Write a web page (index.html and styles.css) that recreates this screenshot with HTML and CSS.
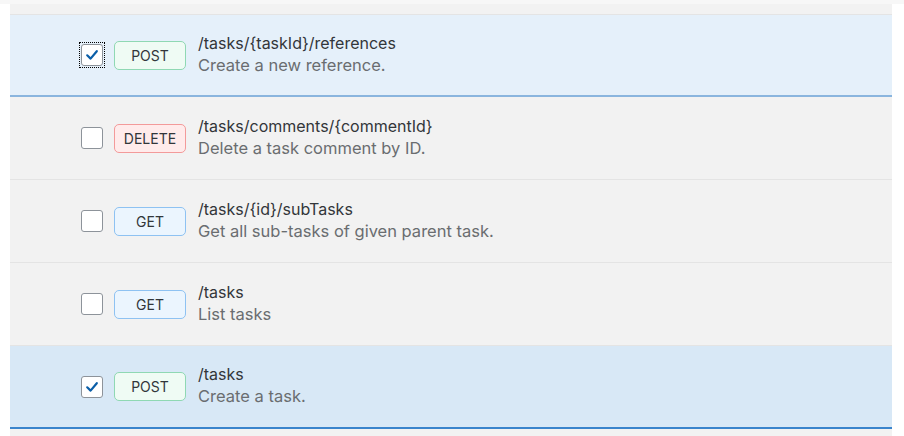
FILE: index.html
```html
<!DOCTYPE html>
<html>
<head>
<meta charset="utf-8">
<link rel="stylesheet" href="styles.css">
</head>
<body>
<div class="topstrip"></div>
<div class="list">
  <div class="row selected">
    <span class="cb checked focus"><svg viewBox="0 0 16 16" width="16" height="16"><path d="M3.2 8.3 L6.6 11.6 L12.8 4.2" fill="none" stroke="#0a5ea8" stroke-width="2.2" stroke-linecap="round" stroke-linejoin="round"/></svg></span>
    <span class="badge post">POST</span>
    <div class="txt"><div class="title">/tasks/{taskId}/references</div><div class="desc">Create a new reference.</div></div>
  </div>
  <div class="row">
    <span class="cb"></span>
    <span class="badge delete">DELETE</span>
    <div class="txt"><div class="title">/tasks/comments/{commentId}</div><div class="desc">Delete a task comment by ID.</div></div>
  </div>
  <div class="row">
    <span class="cb"></span>
    <span class="badge get">GET</span>
    <div class="txt"><div class="title">/tasks/{id}/subTasks</div><div class="desc">Get all sub-tasks of given parent task.</div></div>
  </div>
  <div class="row">
    <span class="cb"></span>
    <span class="badge get">GET</span>
    <div class="txt"><div class="title">/tasks</div><div class="desc">List tasks</div></div>
  </div>
  <div class="row selected hover">
    <span class="cb checked"><svg viewBox="0 0 16 16" width="16" height="16"><path d="M3.2 8.3 L6.6 11.6 L12.8 4.2" fill="none" stroke="#0a5ea8" stroke-width="2.2" stroke-linecap="round" stroke-linejoin="round"/></svg></span>
    <span class="badge post">POST</span>
    <div class="txt"><div class="title">/tasks</div><div class="desc">Create a task.</div></div>
  </div>
</div>
</body>
</html>
```
FILE: styles.css
```css
html, body {
  margin: 0;
  padding: 0;
  background: #ffffff;
  font-family: Inter, "Liberation Sans", Arial, sans-serif;
}
.topstrip {
  height: 4px;
  background: #f7f7f7;
}
.list {
  margin: 0 12px 0 10px;
  background: #f2f2f2;
  padding-top: 10px;
  height: 432px;
  box-sizing: border-box;
}
.row {
  display: flex;
  align-items: center;
  height: 83px;
  box-sizing: border-box;
  padding-left: 71px;
  border-bottom: 1px solid #e4e4e4;
  background: #f2f2f2;
}
.row:first-child {
  border-top: 1px solid #e4e4e4;
}
.row.selected {
  background: #e5f0fa;
  border-bottom: 2px solid #8ab5de;
}
.row.selected.hover {
  background: #d8e8f6;
  border-bottom: 2px solid #3a84cc;
}
.cb {
  width: 22px;
  height: 22px;
  box-sizing: border-box;
  border: 1px solid #8d939a;
  border-radius: 3px;
  background: #ffffff;
  display: flex;
  align-items: center;
  justify-content: center;
  flex: none;
  position: relative;
}
.cb.focus::after {
  content: "";
  position: absolute;
  left: -3px;
  top: -3px;
  right: -3px;
  bottom: -3px;
  border: 1px dotted #000000;
}
.badge {
  margin-left: 11px;
  width: 72px;
  height: 29px;
  box-sizing: border-box;
  border-radius: 5px;
  border: 1px solid;
  display: flex;
  align-items: center;
  justify-content: center;
  font-size: 14px;
  color: #32363a;
  flex: none;
}
.badge.post {
  background: #effbf4;
  border-color: #8fd8b3;
}
.badge.delete {
  background: #ffebeb;
  border-color: #f39a9a;
}
.badge.get {
  background: #ebf5fe;
  border-color: #8ec2f2;
}
.txt {
  margin-left: 12px;
  margin-top: -2px;
  display: flex;
  flex-direction: column;
}
.title {
  font-size: 16px;
  line-height: 22px;
  color: #32363a;
}
.desc {
  font-size: 16.5px;
  line-height: 23px;
  color: #6a6d70;
}
```
